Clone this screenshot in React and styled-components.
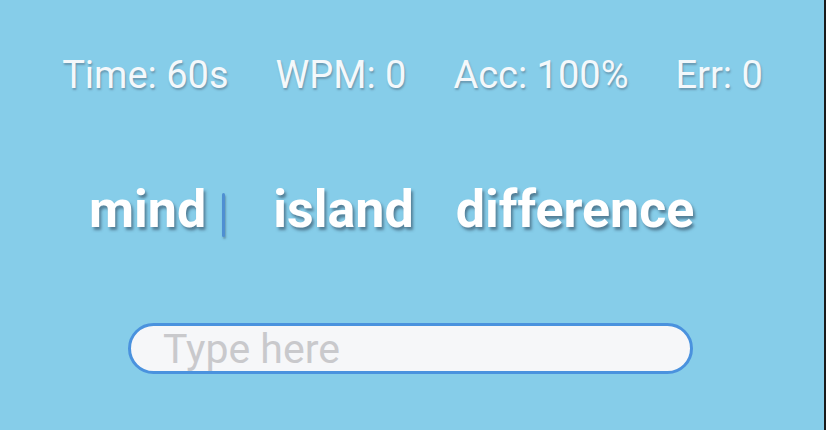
import styled, { createGlobalStyle } from "styled-components"

const Global = createGlobalStyle`
    html, body {
        margin: 0;
        padding: 0;
        background: #86cde9;
    }
    body {
        font-family: Roboto, "Noto Sans", sans-serif;
    }
`

const stats = [
    { label: "Time", value: "60s" },
    { label: "WPM", value: "0" },
    { label: "Acc", value: "100%" },
    { label: "Err", value: "0" },
]

const words = ["mind", "island", "difference"]

const App = () => {
    return (
        <>
            <Global />
            <Container>
                <Stats>
                    {stats.map((s) => (
                        <Stat key={s.label}>{s.label}: {s.value}</Stat>
                    ))}
                </Stats>
                <Words>
                    {words.map((w, i) => (
                        <Word key={w}>
                            {w}
                            {i === 0 && <Caret />}
                        </Word>
                    ))}
                </Words>
                <InputRow>
                    <Input placeholder="Type here" />
                </InputRow>
            </Container>
        </>
    )
}

export default App

const Container = styled.div`
    width: 826px;
    height: 430px;
    box-sizing: border-box;
    border-right: 2px solid #1a1a1a;
    background: #86cde9;
    padding-top: 52px;
    display: flex;
    flex-direction: column;
`
const Stats = styled.div`
    display: flex;
    justify-content: center;
    gap: 47px;
    padding-left: 1px;
`
const Stat = styled.div`
    font-size: 38px;
    line-height: 46px;
    color: #f4f8fb;
    text-shadow: 1px 2px 2px rgba(70, 90, 110, 0.45);
`
const Words = styled.div`
    display: flex;
    align-items: baseline;
    gap: 42px;
    padding-left: 89px;
    margin-top: 82px;
`
const Word = styled.span`
    display: inline-block;
    font-size: 52px;
    font-weight: 700;
    line-height: 60px;
    color: #ffffff;
    text-shadow: 2px 3px 3px rgba(40, 60, 80, 0.55);
`
const Caret = styled.span`
    display: inline-block;
    width: 3px;
    height: 44px;
    margin: 0 6px 0 16px;
    vertical-align: -10px;
    border-radius: 2px;
    background: #4f8fd2;
    box-shadow: 1px 2px 2px rgba(40, 60, 80, 0.35);
`
const InputRow = styled.div`
    display: flex;
    padding-left: 128px;
    margin-top: 83px;
`
const Input = styled.input`
    width: 565px;
    height: 51px;
    box-sizing: border-box;
    border: 3px solid #4a92de;
    border-radius: 26px;
    background: #f6f7f9;
    padding: 0 32px;
    font-family: Roboto, "Noto Sans", sans-serif;
    font-size: 41px;
    color: #333;
    outline: none;
    &::placeholder {
        color: #c9c9cc;
    }
`
